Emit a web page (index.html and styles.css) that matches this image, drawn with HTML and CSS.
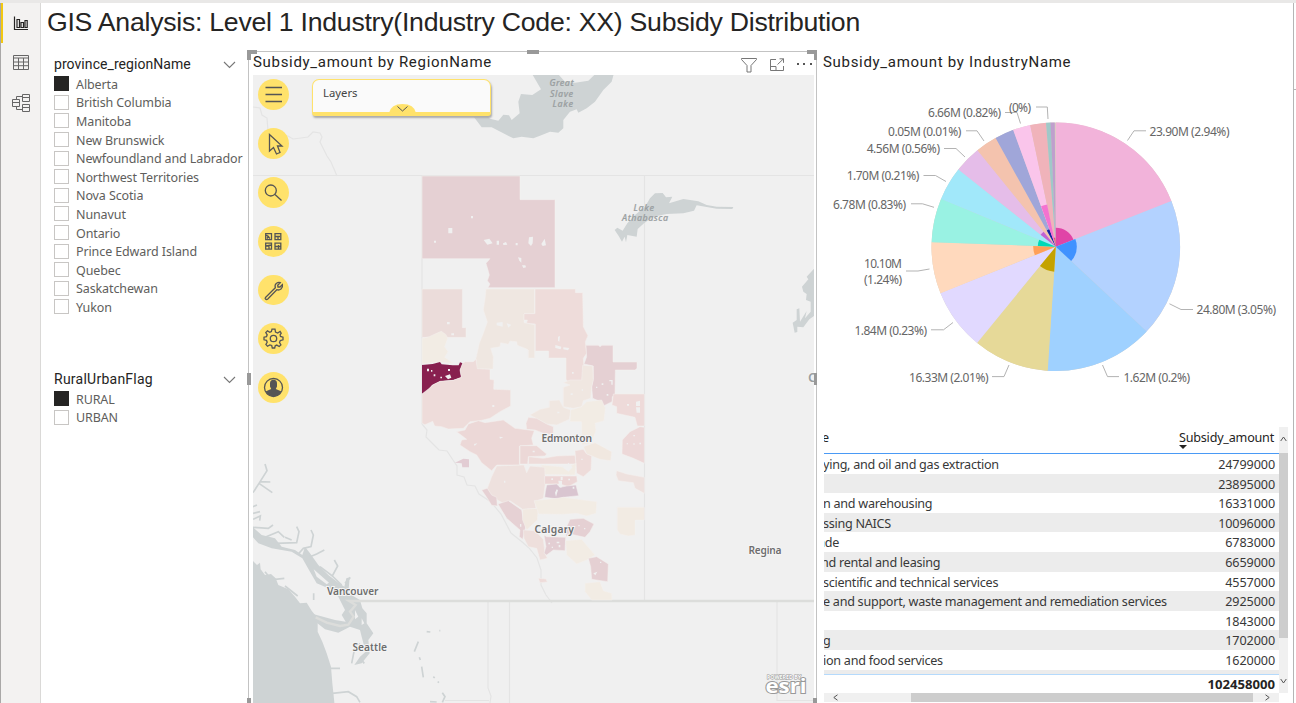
FILE: index.html
```html
<!DOCTYPE html>
<html lang="en">
<head>
<meta charset="utf-8">
<title>GIS Analysis</title>
<link rel="stylesheet" href="styles.css">
</head>
<body>
<div class="app">
  <nav class="rail">
    <a class="rail-item active"><svg width="16" height="16" viewBox="0 0 16 16"><path d="M1.5 1.5V14.5H15M4 12.5V4.5H6.5V12.5ZM8 12.5V7.5H10.5V12.5ZM12 12.5V5.5H14.2V12.5Z"/></svg></a>
    <a class="rail-item"><svg width="16" height="16" viewBox="0 0 16 16"><path d="M.5 .5H15.5V14.5H.5ZM.5 3H15.5M.5 7H15.5M.5 10.7H15.5M5.5 3V14.5M10.5 3V14.5"/></svg></a>
    <a class="rail-item"><svg width="18" height="18" viewBox="0 0 18 18"><path d="M.5 5.5H7.5V12.500H.5ZM.5 8.500H7.500M10.500 .5H17.500V7.500H10.500ZM10.500 3.500H17.500M10.500 10.500H17.500V17.500H10.500ZM10.500 13.500H17.500M4.500 5.500V2.500H10.500M4.500 12.500V15.500H10.500"/></svg></a>
  </nav>
  <main class="canvas">
    <h1 class="title">GIS Analysis: Level 1 Industry(Industry Code: XX) Subsidy Distribution</h1>
    <div class="columns">
      <section class="filters">
        <div class="slicer provinces">
          <header><span>province_regionName</span><svg width="13" height="8" viewBox="0 0 13 8"><path d="M1 1L6.500 6.500L12 1"/></svg></header>
          <ul>
            <li class="on">Alberta</li><li>British Columbia</li><li>Manitoba</li><li>New Brunswick</li><li>Newfoundland and Labrador</li><li>Northwest Territories</li><li>Nova Scotia</li><li>Nunavut</li><li>Ontario</li><li>Prince Edward Island</li><li>Quebec</li><li>Saskatchewan</li><li>Yukon</li>
          </ul>
        </div>
        <div class="slicer">
          <header><span>RuralUrbanFlag</span><svg width="13" height="8" viewBox="0 0 13 8"><path d="M1 1L6.500 6.500L12 1"/></svg></header>
          <ul><li class="on">RURAL</li><li>URBAN</li></ul>
        </div>
      </section>

      <section class="map-card">
        <i class="handle tl"></i><i class="handle top"></i><i class="handle tr"></i>
        <i class="handle left"></i><i class="handle right"></i><i class="handle bl"></i><i class="handle br"></i>
        <header class="map-head">
          <h2>Subsidy_amount by RegionName</h2>
          <div class="tools">
            <svg width="16" height="15" viewBox="0 0 16 15"><path d="M.5 .5H15.500V1.500L10 7.500V14H6V7.500L.5 1.500Z"/></svg>
            <svg width="15" height="14" viewBox="0 0 15 14"><path d="M6 1.500H.5V12.500H13.500V8M.5 8.500H6V12.500M7.500 6.500L13.500 .8M9.500 .8H13.500V4.800"/></svg>
            <span class="dots"><i></i><i></i><i></i></span>
          </div>
        </header>
        <div class="map">
          <svg class="base" width="561" height="628" viewBox="253 75 561 628">
            <rect x="253" y="75" width="561" height="628" fill="#f0f0f0"/>
            <!-- provincial and state lines -->
            <g class="border">
              <path d="M253 175.500H814M422 176V424M644.500 176V600M488 602V688L491 696 490 703M509.500 602V703M777 602V700.500H814M445 700.500H489"/>
              <path d="M253 107l7 1 2 7 5 3 1 13 8 3 12 2 5 3 8-1 7-1 5-5 7 1 2 4-2 5 7 14 4 6 6 14"/>
              <path d="M422 424l5 6-1 7 8 8 5 5 8 1 6 9 4 6 0 9 7 2 3 8 8 1 4 8 12 8 10 12 10 19 10 8 8 7 8 10 4 12v15l5 10 6 8"/>
            </g>
            <!-- lakes -->
            <g class="water">
              <path transform="translate(245 40) scale(.33333)" d="M862 103L888 148 862 165 828 162 820 185 824 220 800 240 792 226 775 224 760 242 735 236 725 226 686 230 710 262 740 262 775 280 805 295 830 290 865 295 885 287 915 275 940 278 955 265 955 240 975 215 995 208 1000 218 1025 205 1050 185 1075 150 1100 125 1106 103H1050L1030 122 990 128 960 125 940 103Z"/>
              <g transform="translate(540 40) scale(.33333)">
                <path d="M224 570L232 563 248 572 262 550 285 525 315 500 330 475 345 460 368 459 378 472 397 470 387 490 430 477 475 484 500 495 530 500 580 501 577 507 530 506 470 496 462 512 430 520 380 522 340 530 312 550 293 567 290 590 262 585 258 607 254 590 246 605 236 588Z"/>
                <path d="M822 686L800 710 805 718 786 740 790 755 800 762 798 780 812 785 812 815 795 835 800 813 780 845 778 805 770 808 770 840 758 848 764 878 772 876 772 860 790 862 808 838 822 828Z"/>
              </g>
            </g>
            <!-- Pacific coast -->
            <g transform="translate(245 450) scale(.33333)">
              <g class="water">
                <path d="M24 333L36 345 45 338 47 358 60 375 78 372 92 385 100 405 130 418 150 440 165 460 185 458 200 482 218 505 218 545 232 575 245 610 258 650 262 700 268 757V762H24Z"/>
                <path d="M24 232L50 255 90 265 110 290 150 300 172 315 180 290 195 310 220 345 250 375 280 398 298 410 304 385 314 382 310 430 345 450 352 475 365 490 365 520 385 550 370 570 374 610 350 640 328 645 345 620 362 605 350 560 345 540 315 530 280 548 240 538 205 510 195 490 215 495 270 510 302 515 290 495 300 480 280 440 250 415 215 400 195 365 172 325 140 305 80 295 40 280 24 262Z"/>
              </g>
              <g class="inlet">
                <path d="M24 128L42 100 66 62 60 42M42 100L82 128M46 95L76 96M24 170L36 165M24 190L45 185M24 208L46 198 44 212M24 232L70 235 84 225M60 262L100 245 118 262M92 280L155 278 162 245 155 230M120 262L140 270M160 312L175 295 198 290 205 255 198 240M195 320L215 312 238 300M225 350L262 378 278 348 268 330M262 378L290 405M300 400L316 382M90 388L118 385M120 408L158 438M60 365L88 400"/>
                <path d="M320 640L330 590 345 580M345 625L358 640M258 655L285 655M262 730L310 725 335 740 345 757M592 728L600 740 592 757M545 545L556 546M583 542L586 542M508 605L520 575M523 622L526 630M530 650L535 682M565 680L569 684M578 695L582 698M555 755L575 756M206 430V450"/>
              </g>
              <g fill="#f0f0f0"><path d="M206 358L252 398 245 403 215 380ZM330 480L340 500 330 508ZM350 505L358 520 350 525Z"/></g>
              <path class="frontier" d="M212 502L245 518 285 528 310 524 326 500 315 485 332 465 312 453H1707"/>
            </g>
            <!-- northern regions -->
            <g class="regions" transform="translate(400 160) scale(.33333)">
              <path fill="#e5d0d3" d="M66 48H360V119H465V383H264L270 372 262 362 268 345 264 330 258 310 270 296H66Z"/>
              <path fill="#ebdcda" d="M66 387H187V503H198V532H66Z"/>
              <path fill="#f2ece4" d="M66 535L88 530 110 520 124 514 138 524 143 535 134 560 144 575 134 592 160 610 115 606 66 612Z"/>
              <path fill="#efe7e1" d="M258 387H403V461H372V488L404 494V594H385V570L378 566 352 556 350 545 330 543 325 553 302 548 300 560 272 565 280 590 279 627H230L228 595 238 550 250 520 262 486 250 450 256 410Z"/>
              <path fill="#eedcda" d="M405 387H526V398H548L550 500 564 527 556 545 560 580 550 595 552 625 556 640 545 668 505 666 498 658V594H446V573H406V492L380 490 382 480 372 480V461H405Z"/>
              <path fill="#e5d0d3" d="M558 556L595 556 600 560 606 556H639V606H711V625L705 630H646L645 705 637 710 636 725 610 738 605 726 578 715 575 680 580 655V618L552 612 560 590Z"/>
              <path fill="#88204f" stroke="none" d="M66 615L98 612 120 606 125 613 158 616 176 616 180 607 188 610 180 630 184 652 160 660 120 664 96 675 85 690 66 702Z"/>
              <g fill="#f0f0f0" stroke="none">
                <path d="M145 204H157V220H145ZM213 168H219V175H213ZM102 242H108V248H102ZM251 240L268 236 278 250 262 254ZM290 242H297V254H290ZM309 250L318 246 322 254 310 255ZM387 232L399 230 398 250 393 258 385 250ZM424 252L434 236 438 256 428 258ZM347 249H353V256H347ZM354 292L364 294 364 308 358 302ZM366 316L376 316 378 322 370 324Z"/>
                <path d="M141 486H149V493H141ZM154 520H162V526H154ZM290 488L308 486 308 500 290 496ZM320 490L334 494 325 503ZM474 530L480 528 478 545 474 542ZM466 555L484 560 482 568 466 564ZM490 562L508 564 504 571 490 568ZM516 636H521V641H516ZM81 626H87V634H81ZM93 630H97V635H93ZM144 627H150V633H144ZM101 643H106V649H101ZM135 648L150 643 154 653 144 658ZM121 650H126V655H121ZM220 665L238 655 248 664 228 672ZM628 660H638V674H634V664H628Z"/>
              </g>
            </g>
            <!-- central and southern regions -->
            <g class="regions" transform="translate(400 380) scale(.33333)">
              <path fill="#eedcda" d="M66 42L85 27 100 14 120 4 160 1 184 -8 180 -30 188 -50 196 -55 220 -55 228 -62 232 -34 270 -32 270 -2 282 0 281 28 332 30 332 78 300 95 270 115 240 122 210 125 190 145 145 147 125 140 104 138 98 124 75 134 66 130Z"/>
              <path fill="#f0e7e1" d="M548 -44L578 -42 580 0 575 20 572 55 550 62 545 80 520 85 490 80 490 22 510 15 490 8 510 0 545 0Z"/>
              <path fill="#f0e7e1" d="M448 62L478 60 490 82 512 90 508 118 470 135 440 132 390 105 420 88 448 82Z"/>
              <path fill="#f2ece4" d="M560 65L605 60 616 85 612 122 585 130 588 150 575 190 545 195 545 125 510 125 512 90 545 80Z"/>
              <path fill="#eddad9" d="M385 112L410 115 440 132 460 140 460 165 430 160 405 150 380 148 378 130Z"/>
              <path fill="#eedad9" d="M640 42H733V138H712L705 112 650 100 650 80 636 75Z"/>
              <path fill="#edd8d8" d="M720 140L733 142V250L700 235 666 222 667 180 690 155Z"/>
              <path fill="#eee1de" d="M650 272L680 282 733 292V340L705 325 700 308 655 302 648 285Z"/>
              <path fill="#f2ebe3" d="M652 382H733V420H705V465L685 468 660 462 652 450Z"/>
              <path fill="#ecd8d7" d="M205 132L235 122 255 128 310 120 345 145 403 152 395 175 400 195 358 198V255H290L275 272 245 248 230 225 210 215 180 195 185 180 200 178 170 155 195 150Z"/>
              <path fill="#ecd8d7" d="M360 197H410L440 222 435 228 385 230 383 252 360 252Z"/>
              <path fill="#eedcda" d="M386 230L430 235 470 228 525 226 528 252 386 252Z"/>
              <path fill="#f1e8e0" d="M550 200L585 188 635 215 632 242 600 238 560 222Z"/>
              <path fill="#eedcda" d="M525 212L550 208 560 222 575 228 573 270 550 290 530 280Z"/>
              <path fill="#f2ece4" d="M424 255L500 262 528 250 525 285 424 283Z"/>
              <path fill="#eee1de" d="M290 258L372 255 380 278 390 258 434 262 436 310 430 355 405 365 408 385 368 388 330 362 310 370 275 350 262 325 275 290Z"/>
              <path fill="#ecd6d6" d="M434 288H530L532 305 505 320 480 312 434 312Z"/>
              <path fill="#d9c5d0" d="M440 315L470 312 480 322 500 318 528 315 536 347 490 352 475 357 434 352 436 335Z"/>
              <path fill="#e6d1d4" d="M245 330L262 325 275 345 290 352 292 378 275 376 262 355Z"/>
              <path fill="#e6d1d4" d="M294 372L325 362 365 390 370 420 380 430 375 450 368 478 358 470 360 450 320 415Z"/>
              <path fill="#e2ccd3" stroke="none" d="M165 248L190 236 207 238V262H187L185 250Z"/>
              <path fill="#f1e9e1" d="M368 388L415 385 412 420 380 450 368 420Z"/>
              <path fill="#f2ece4" d="M402 362L470 355 490 352 590 365 588 400 560 408 530 400 490 403 416 402Z"/>
              <path fill="#eedfdc" d="M370 450L405 452 430 478 435 520 442 535 420 540 410 505 385 500 372 475Z"/>
              <path fill="#e5d0d3" d="M510 418L550 415 582 432 570 455 555 472 510 462 498 470 500 440Z"/>
              <path fill="#e3ced3" d="M432 465L440 470 497 472 495 512 460 510 440 525 432 520 438 500Z"/>
              <path fill="#f2ece4" d="M497 482L545 478 585 525 560 540 530 552 500 525Z"/>
              <path fill="#e5d0d3" d="M565 535L590 530 625 552 623 605 575 598 572 560Z"/>
              <path fill="#f2ece4" d="M555 610L600 605 610 632 635 640 636 660H575L555 635Z"/>
              <path fill="#eedcda" d="M415 595L438 597 442 606 420 608Z"/>
              <g fill="#f0f0f0" stroke="none">
                <path d="M708 65L720 62V78H708ZM708 82H720V98H710ZM681 72H687V77H681ZM277 75H283V81H277ZM298 170L310 172 300 176ZM222 192L232 190 224 198ZM398 212H404V217H398ZM488 262L500 258 505 248 518 262 505 275ZM454 295H459V300H454ZM482 290H488V300H482ZM505 296H510V301H505ZM475 302H486V322H478ZM465 338L470 328 474 330 468 350ZM518 320H523V326H518ZM605 10H610V15H605ZM620 42H625V47H620ZM588 20H592V24H588ZM700 165H705V169H700ZM718 188H723V193H718ZM700 190H704V194H700ZM680 190H684V193H680ZM312 302H316V308H312ZM544 236H548V240H544ZM535 435H539V439H535ZM552 444H556V448H552ZM470 485H478V490H470ZM445 488H450V493H445ZM455 500H459V504H455ZM476 495H481V502H476ZM580 580L592 575 586 586ZM600 545H604V549H600ZM360 432H364V440H360ZM512 40H518V45H512ZM545 28H549V32H545ZM472 95H478V100H472Z"/>
              </g>
            </g>
            <g class="lake-name">
              <text x="549.500" y="86" textLength="24">Great</text><text x="550" y="96.500" textLength="23">Slave</text><text x="552.500" y="107.200" textLength="20.500">Lake</text>
              <text x="633.500" y="211" textLength="20.500">Lake</text><text x="622" y="221.300" textLength="46">Athabasca</text>
            </g>
            <g class="city">
              <text x="541.500" y="441.500" textLength="50.500">Edmonton</text>
              <text x="534.500" y="532.500" textLength="39.500">Calgary</text>
              <text x="748.500" y="553.500" textLength="33">Regina</text>
              <text x="327" y="594.500" textLength="51.500">Vancouver</text>
              <text x="352.500" y="650.500" textLength="34.500">Seattle</text>
              <text x="808" y="382" class="far">C</text>
            </g>
            <g class="esri"><text x="767" y="678.500" class="by" textLength="34" lengthAdjust="spacingAndGlyphs">POWERED BY</text><text x="765.500" y="693" class="mark" textLength="41" lengthAdjust="spacingAndGlyphs">esri</text></g>
          </svg>
          <div class="map-tools">
            <button><svg viewBox="0 0 31 31"><path d="M7.500 8.500H24M7.500 15.500H24M7.500 22.500H24"/></svg></button>
            <button><svg viewBox="0 0 31 31"><path d="M11.500 6.500V23L15.500 19.500 18.500 26 22 24.500 19.500 18H24Z"/></svg></button>
            <button><svg viewBox="0 0 31 31"><circle cx="12.800" cy="13.500" r="5.500"/><path d="M17 17.500L23.500 23.500"/></svg></button>
            <button><svg viewBox="0 0 31 31"><path d="M7.700 7.700H13.500V13.700H7.700ZM17 7.700H22.800V13.700H17ZM7.700 17.200H13.500V23.200H7.700ZM17 17.200H22.800V23.200H17ZM8.500 9L12 12.500M9 12.500L11 10M17.500 10.500H22M20 10V13M8 20L13 19M11 20V22.500M17.500 20.500H22.500M20.500 19V22.500"/></svg></button>
            <button><svg viewBox="0 0 31 31"><path d="M7.500 22.500L17.300 12.800Q16.500 9.500 18.500 8.200 20.500 6.800 22.300 7.600L19.700 10.200 20 12 22 12 24.400 9.600Q25 12 23 14 21 15.500 18.800 14.700L9.800 24Q8.500 25 7.500 24 6.800 23.200 7.500 22.500Z"/></svg></button>
            <button><svg viewBox="0 0 31 31"><circle cx="15.500" cy="15.500" r="3.200"/><path d="M14 6.200H17L17.500 9 19.700 10 22.100 8.400 23.200 10.200 22.100 11.800 22.500 13.500 25 14.200V16.800L22.300 17.500 21.500 19.500 22.900 21.900 21.200 23.500 18.800 22.100 17.200 22.800 16.700 25H14.300L13.700 22.500 11.800 21.900 9.500 23.200 7.900 21.500 9.200 19.200 8.500 17.400 6 16.800V14.200L8.500 13.600 9.200 11.800 7.800 9.500 9.500 7.900 11.800 9.200 13.400 8.600Z"/></svg></button>
            <button><svg viewBox="0 0 31 31"><circle cx="15.500" cy="15.500" r="9"/><path class="solid" d="M12 11.500A3.500 3.700 0 0 1 19 11.500V14.500L17.800 17 23 19.200V20.500A9 9 0 0 1 8 20.500V19.200L13.200 17 12 14.500Z"/></svg></button>
          </div>
          <div class="layers">Layers<svg width="27" height="9" viewBox="0 0 27 9"><path class="tab" d="M0 9Q2 0 13.500 0T27 9Z"/><path class="chev" d="M8.500 2.500L13.500 7 18.500 2.500"/></svg></div>
        </div>
      </section>

      <section class="right">
        <h2>Subsidy_amount by IndustryName</h2>
        <svg class="pie" width="470" height="350" viewBox="824 77 470 350">
          <g transform="translate(1055.800 246.700) rotate(-90)" fill="none">
            <g stroke-width="124.300">
              <circle class="arc" r="62.150" pathLength="360" stroke="#d7cfc0" stroke-dasharray="360 0"/>
              <circle class="arc" r="62.150" pathLength="360" stroke="#f2b3da" stroke-dasharray="68.500 360"/>
              <circle class="arc" r="62.150" pathLength="360" stroke="#b3d2ff" stroke-dasharray="64.700 360" stroke-dashoffset="-68.400"/>
              <circle class="arc" r="62.150" pathLength="360" stroke="#9fd1ff" stroke-dasharray="51 360" stroke-dashoffset="-133"/>
              <circle class="arc" r="62.150" pathLength="360" stroke="#e6d998" stroke-dasharray="35.600 360" stroke-dashoffset="-183.800"/>
              <circle class="arc" r="62.150" pathLength="360" stroke="#e1d9ff" stroke-dasharray="28.800 360" stroke-dashoffset="-219.300"/>
              <circle class="arc" r="62.150" pathLength="360" stroke="#ffd9bd" stroke-dasharray="24.200 360" stroke-dashoffset="-248"/>
              <circle class="arc" r="62.150" pathLength="360" stroke="#99f2e3" stroke-dasharray="20.600 360" stroke-dashoffset="-272.100"/>
              <circle class="arc" r="62.150" pathLength="360" stroke="#a1e8fa" stroke-dasharray="15.900 360" stroke-dashoffset="-292.600"/>
              <circle class="arc" r="62.150" pathLength="360" stroke="#e5bde9" stroke-dasharray="12.600 360" stroke-dashoffset="-308.400"/>
              <circle class="arc" r="62.150" pathLength="360" stroke="#f4c3ae" stroke-dasharray="10.200 360" stroke-dashoffset="-320.900"/>
              <circle class="arc" r="62.150" pathLength="360" stroke="#a0a6d9" stroke-dasharray="9 360" stroke-dashoffset="-331"/>
              <circle class="arc" r="62.150" pathLength="360" stroke="#fac5eb" stroke-dasharray="8.200 360" stroke-dashoffset="-339.900"/>
              <circle class="arc" r="62.150" pathLength="360" stroke="#f0b3ba" stroke-dasharray="7.400 360" stroke-dashoffset="-348.050"/>
              <circle class="arc" r="62.150" pathLength="360" stroke="#a0c8c8" stroke-dasharray="2.200 360" stroke-dashoffset="-355.400"/>
              <circle class="arc" r="62.150" pathLength="360" stroke="#bf9fcd" stroke-dasharray="2 360" stroke-dashoffset="-357.500"/>
            </g>
            <circle r="9.500" stroke-width="19" pathLength="360" stroke="#e044a7" stroke-dasharray="68.400 360"/>
            <circle r="10.500" stroke-width="21" pathLength="360" stroke="#4092ff" stroke-dasharray="64.600 360" stroke-dashoffset="-68.400"/>
            <circle r="12.500" stroke-width="25" pathLength="360" stroke="#c4a200" stroke-dasharray="35.500 360" stroke-dashoffset="-183.800"/>
            <circle r="11.300" stroke-width="22.600" pathLength="360" stroke="#ffa058" stroke-dasharray="24.100 360" stroke-dashoffset="-248"/>
            <circle r="9" stroke-width="18" pathLength="360" stroke="#00d9b8" stroke-dasharray="20.500 360" stroke-dashoffset="-272.100"/>
            <circle r="9.700" stroke-width="19.400" pathLength="360" stroke="#bf63d2" stroke-dasharray="12.500 360" stroke-dashoffset="-308.400"/>
            <circle r="9.300" stroke-width="18.600" pathLength="360" stroke="#12239e" stroke-dasharray="8.900 360" stroke-dashoffset="-331"/>
            <circle r="21.500" stroke-width="43" pathLength="360" stroke="#f472d0" stroke-dasharray="8.150 360" stroke-dashoffset="-339.900"/>
            <circle r="4.500" stroke-width="9" pathLength="360" stroke="#d64550" stroke-dasharray="7.400 360" stroke-dashoffset="-348.050"/>
          </g>
          <path class="leader" d="M1127.500 140.500L1134 130.800H1146M1169.500 303.800L1181 309.500H1193M1102.500 365L1107.500 376.600H1119M1009 365L1004 376.600H992M953 322.500L943.500 329.800H931M929.500 269L918 271H906M934 207.300L922.500 203.800H911M946 181.500L935.500 175.500H923.500M965 157L956 148.500H944M984 141L977 130.800H966M1020.500 123.500L1017 112.500H1005M1048 119L1047.300 107H1036"/>
          <g class="label">
            <text x="1149.500" y="135.800" textLength="80">23.90M (2.94%)</text>
            <text x="1196.500" y="314" textLength="79.500">24.80M (3.05%)</text>
            <text x="1123.500" y="381.800" textLength="66.500">1.62M (0.2%)</text>
            <text x="909" y="381.800" textLength="79.500">16.33M (2.01%)</text>
            <text x="854.500" y="335" textLength="72.500">1.84M (0.23%)</text>
            <text x="864" y="268" textLength="38">10.10M</text>
            <text x="864" y="284" textLength="38">(1.24%)</text>
            <text x="833" y="208.800" textLength="73">6.78M (0.83%)</text>
            <text x="846.700" y="179.800" textLength="72.600">1.70M (0.21%)</text>
            <text x="866.700" y="152.800" textLength="73.300">4.56M (0.56%)</text>
            <text x="888" y="135.800" textLength="73.300">0.05M (0.01%)</text>
            <text x="928" y="116.800" textLength="73">6.66M (0.82%)</text>
            <text x="1009" y="111.800" textLength="22">(0%)</text>
          </g>
        </svg>
        <div class="grid">
          <div class="table">
            <div class="thead"><span class="cut">e</span><span class="sorted">Subsidy_amount</span></div>
            <div class="tbody">
              <div class="row"><span class="cut">ying, and oil and gas extraction</span><b>24799000</b></div>
              <div class="row"><span></span><b>23895000</b></div>
              <div class="row"><span>n and warehousing</span><b>16331000</b></div>
              <div class="row"><span>ssing NAICS</span><b>10096000</b></div>
              <div class="row"><span class="clip-a">ade</span><b>6783000</b></div>
              <div class="row"><span class="clip-n">nd rental and leasing</span><b>6659000</b></div>
              <div class="row"><span>scientific and technical services</span><b>4557000</b></div>
              <div class="row"><span>e and support, waste management and remediation services</span><b>2925000</b></div>
              <div class="row"><span></span><b>1843000</b></div>
              <div class="row"><span>g</span><b>1702000</b></div>
              <div class="row"><span>ion and food services</span><b>1620000</b></div>
              <div class="row"></div>
            </div>
            <div class="total">102458000</div>
            <div class="hscroll"><svg width="5" height="7" viewBox="0 0 5 7"><path d="M4.500 .8L.8 3.500 4.500 6.200"/></svg><i></i><svg width="5" height="7" viewBox="0 0 5 7"><path d="M.5 .8L4.200 3.500 .5 6.200"/></svg></div>
          </div>
          <div class="vscroll"><svg width="7" height="6" viewBox="0 0 7 6"><path d="M.7 5L3.500 1 6.300 5"/></svg><i></i><svg width="7" height="6" viewBox="0 0 7 6"><path d="M.7 1L3.500 5 6.300 1"/></svg></div>
        </div>
      </section>
    </div>
  </main>
  <aside class="edge"></aside>
</div>
</body>
</html>
```
FILE: styles.css
```css
* { box-sizing: border-box; }
body { margin: 0; background: #fff; overflow: hidden; font-family: "Noto Sans", "Open Sans", sans-serif; color: #252423; }
h1, h2, ul { margin: 0; padding: 0; font-weight: 400; }
.app { display: flex; width: 1296px; height: 703px; border-top: 3px solid #e9e8e7; }

.rail { width: 41px; background: #f3f2f1; border-left: 1px solid #a9a8a7; border-right: 1px solid #dad9d7; flex: none; }
.rail-item { display: flex; height: 40px; align-items: center; justify-content: center; padding-right: 2px; border-left: 2px solid transparent; }
.rail-item svg { fill: none; stroke: #666; stroke-width: 1; }
.rail-item.active { border-left-color: #f2c811; }
.rail-item.active svg { stroke: #252423; stroke-width: 1.2; }

.canvas { width: 1252px; flex: none; }
.title { height: 48px; padding-left: 6px; font: 400 26.67px/38px "Liberation Sans", sans-serif; letter-spacing: -.26px; white-space: nowrap; }
.columns { display: flex; height: 652px; }

.filters { width: 207px; padding: 4px 0 0 13px; }
.slicer header { display: flex; justify-content: space-between; align-items: center; height: 20px; padding-right: 12px; font: 14px/20px Roboto, sans-serif; letter-spacing: .25px; }
.slicer header span { padding-bottom: 2px; }
.provinces header { letter-spacing: .06px; }
.slicer header svg { fill: none; stroke: #777; stroke-width: 1.1; }
.slicer ul { list-style: none; }
.slicer li { display: flex; align-items: center; gap: 7px; height: 18.6px; font-size: 12.5px; letter-spacing: -.11px; color: #605e5c; white-space: nowrap; }
.slicer li::before { content: ""; width: 13px; height: 13px; margin-top: -1px; border: 1px solid #c8c6c4; flex: none; }
.slicer li.on::before { background: #252423; border-color: #252423; }
.provinces { height: 315px; }

.map-card { position: relative; width: 569px; height: 652px; border: solid #c3c3c3; border-width: 1px 1px 0; padding-left: 4px; }
.map-head { display: flex; justify-content: space-between; height: 23px; }
h2 { font: 15px/20px Roboto, sans-serif; letter-spacing: .69px; white-space: nowrap; }
.tools { display: flex; gap: 12px; padding: 6px 4px 0 0; }
.tools svg { fill: none; stroke: #777; }
.tools svg:first-child { margin-right: 1px; }
.dots { display: flex; gap: 4px; padding-top: 5px; }
.dots i { width: 2px; height: 2px; background: #555; margin-right: .4px; }
.handle { position: absolute; z-index: 2; background: #999; }
.tl, .tr { width: 10px; height: 10px; top: -2px; background: none; border-top: 4px solid #999; }
.tl { left: -2px; border-left: 4px solid #999; }
.tr { right: -1px; border-right: 3px solid #999; }
.top { width: 12px; height: 4px; top: -2px; left: 278px; }
.left, .right.handle { width: 4px; height: 12px; top: 321px; }
.left, .bl { left: -2px; }
.right.handle, .br { right: -1px; width: 3px; }
.bl, .br { width: 4px; height: 5px; bottom: 0; }
.map { position: relative; width: 561px; height: 628px; margin-top: -.5px; }
.base { display: block; }
.border { fill: none; stroke: #e4e4e4; stroke-width: 1.2; }
.water { fill: #ced3d4; }
.inlet { fill: none; stroke: #ced3d4; stroke-width: 5; }
.frontier { fill: none; stroke: #dcdddb; stroke-width: 7; }
.regions { stroke: #f4f0ee; stroke-width: 1.6; stroke-linejoin: round; }
.lake-name { font: italic 500 8.8px "Noto Sans", sans-serif; fill: #9a9fa1; stroke: #9a9fa1; stroke-width: .2; }
.city { font: 600 10.3px "Noto Sans", sans-serif; fill: #6e6e6e; stroke: #f4f4f4; stroke-width: 2px; paint-order: stroke; }
.city .far { font-size: 13px; fill: #9a9fa1; }
.esri { font-family: "Open Sans", sans-serif; font-weight: 700; fill: #fff; stroke: #999; stroke-width: 2px; paint-order: stroke; }
.by { font-size: 5px; stroke-width: 1px; }
.mark { font-size: 20px; }

.map-tools { position: absolute; left: 5px; top: 4.5px; display: flex; flex-direction: column; gap: 18px; }
.map-tools button { width: 31px; height: 30.9px; padding: 0; border: 0; border-radius: 50%; background: #ffe26b; }
.map-tools svg { display: block; width: 31px; height: 31px; fill: none; stroke: #555; stroke-width: 1.3; }
.map-tools .solid { fill: #555; stroke: none; }
.layers { position: absolute; left: 59px; top: 4px; width: 179px; height: 37.5px; padding: 4px 0 0 10px; border: 1px solid #ffe26b; border-bottom-width: 4px; border-radius: 7px 7px 3px 3px; background: #fafafa; box-shadow: 1px 2px 2px #aaa; font-size: 11.3px; line-height: 17px; color: #444; }
.layers svg { position: absolute; left: 75.5px; bottom: -1px; }
.tab { fill: #ffe26b; }
.chev { fill: none; stroke: #555; }

.right:not(.handle) { width: 476px; padding-left: 7px; }
.right h2 { height: 26px; padding-top: 1px; margin-left: -1px; }
.pie { display: block; }
.leader { fill: none; stroke: #aaa; stroke-width: .9; }
.label { font-size: 12px; fill: #666; }
.grid { display: flex; height: 276px; }
.table { width: 455px; overflow: hidden; }
.thead { display: flex; justify-content: space-between; height: 27px; padding-right: 5px; border-bottom: 1px solid #4a9af5; font-size: 12.6px; line-height: 21px; letter-spacing: -.22px; }
.sorted { position: relative; }
.sorted::after { content: ""; position: absolute; left: 0; top: 18px; border: 4px solid transparent; border-top-color: #252423; border-bottom: 0; }
.tbody { height: 220px; overflow: hidden; }
.row { display: flex; justify-content: space-between; height: 19.6px; padding-right: 4px; font-size: 12.6px; line-height: 21px; letter-spacing: -.27px; color: #383838; white-space: nowrap; }
.row b { font-weight: 400; letter-spacing: -.1px; }
.row:nth-child(even) { background: #ececec; }
.row span { margin-left: -1px; }
.row .clip-a { margin-left: -6px; }
.row .clip-n { margin-left: -3px; }
.cut { margin-left: -2px; }
.total { height: 19px; border-top: 1px solid #b5dafc; padding-right: 4px; text-align: right; font-weight: 700; font-size: 13.1px; line-height: 18px; }
.hscroll { display: flex; align-items: center; height: 9px; padding: 0 9px; background: #f0f0f0; }
.hscroll i { width: 342px; height: 9px; margin-left: 73px; margin-right: 12px; background: #cdcdcd; flex: none; }
.hscroll svg, .vscroll svg { fill: none; stroke: #555; flex: none; }
.vscroll { display: flex; flex-direction: column; align-items: center; width: 9px; height: 266px; padding: 9px 0; background: #f0f0f0; }
.vscroll i { width: 9px; height: 185px; margin: 11px 0 40px; background: #cdcdcd; flex: none; }
.edge { width: 3px; border-left: 1px solid #b5b5b5; background: linear-gradient(#b5b5b5, #b5b5b5) 0 86px / 3px 1px no-repeat; }
```
